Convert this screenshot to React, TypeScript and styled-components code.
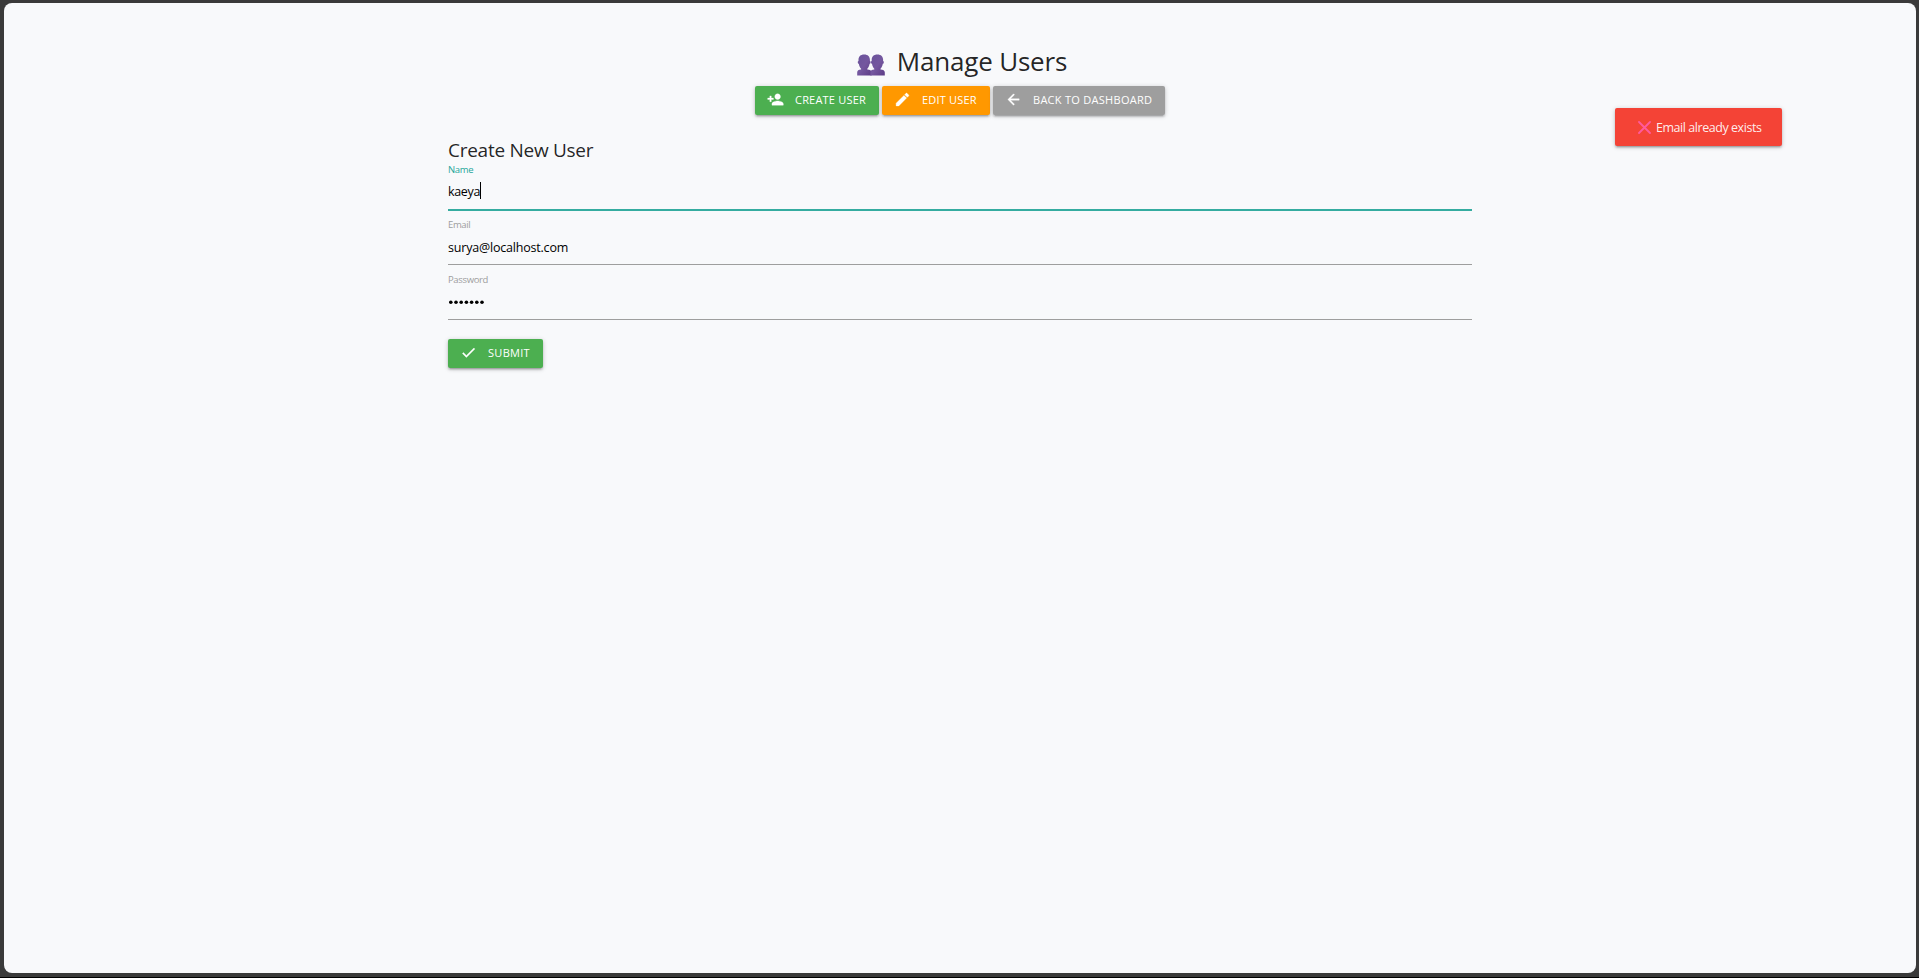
import React from "react";
import styled, { createGlobalStyle } from "styled-components";

const Global = createGlobalStyle`
  *, *::before, *::after { box-sizing: border-box; }
  html, body { margin: 0; background: #3a3a3a; }
  body { font-family: "Segoe UI", "Open Sans", "Noto Sans", sans-serif; color: rgba(0, 0, 0, 0.87); }
  h4, h5 { margin: 0; font-weight: 400; }
`;

const Frame = styled.div`
  height: 978px;
  padding: 3px 3px 4px 4px;
  background: #3a3a3a;
  border-bottom: 1px solid #000;
`;

const Page = styled.main`
  position: relative;
  height: 970px;
  padding-top: 36px;
  border-radius: 8px;
  background: #f8f9fb;
`;

const Header = styled.header`
  display: flex;
  flex-direction: column;
  align-items: center;
`;

const Title = styled.h4`
  display: flex;
  height: 43px;
  margin-bottom: 4px;
  align-items: center;
  gap: 12px;
  padding-left: 4px;
  font-size: 26px;
  line-height: 36px;
  letter-spacing: -0.2px;
  white-space: nowrap;
`;

const PeopleIcon = styled.svg`
  width: 28px;
  height: 22px;
  margin-top: 8px;
`;

const Actions = styled.div`
  display: flex;
  gap: 3px;
`;

const Button = styled.button<{ $color: string; $width: number; $track?: number }>`
  display: flex;
  align-items: center;
  width: ${(p) => p.$width}px;
  height: 29px;
  padding: 0 0 2px 12px;
  border: 0;
  border-radius: 2px;
  background: ${(p) => p.$color};
  box-shadow: 0 2px 2px 0 rgba(0, 0, 0, 0.14), 0 3px 1px -2px rgba(0, 0, 0, 0.12),
    0 1px 5px 0 rgba(0, 0, 0, 0.2);
  color: #fff;
  font-family: inherit;
  font-size: 11px;
  line-height: 27px;
  letter-spacing: ${(p) => p.$track ?? 0.2}px;
  text-transform: uppercase;
  white-space: nowrap;

  svg {
    flex: none;
    width: 17px;
    height: 17px;
    margin-right: 11px;
    fill: currentColor;
  }
`;

const Form = styled.form`
  width: 1024px;
  margin: 22px 0 0 444px;
`;

const FormTitle = styled.h5`
  height: 27px;
  font-size: 19px;
  line-height: 26px;
  letter-spacing: -0.27px;
`;

const Field = styled.div`
  height: 55px;
`;

const Label = styled.label<{ $active?: boolean }>`
  display: block;
  height: 12px;
  color: ${(p) => (p.$active ? "#26a69a" : "#9e9e9e")};
  font-size: 9.5px;
  line-height: 12px;
  letter-spacing: -0.35px;
`;

const Control = styled.div<{ $active?: boolean }>`
  display: flex;
  height: ${(p) => (p.$active ? 35 : 34)}px;
  padding-bottom: ${(p) => (p.$active ? 3 : 1)}px;
  align-items: center;
  border-bottom: ${(p) => (p.$active ? "2px solid #35aca0" : "1px solid #9e9e9e")};
  color: #000;
  font-size: 12.5px;
  letter-spacing: ${(p) => (p.$active ? -0.35 : -0.2)}px;
`;

const Caret = styled.span`
  width: 1px;
  height: 17px;
  margin-top: -1px;
  background: #000;
`;

const Dots = styled.svg`
  width: 38px;
  height: 6px;
`;

const SubmitRow = styled.div`
  padding-top: 10px;
`;

const Toast = styled.div`
  position: absolute;
  top: 105px;
  right: 134px;
  display: flex;
  align-items: center;
  width: 167px;
  height: 38px;
  padding-left: 23px;
  border-radius: 2px;
  background: #f44336;
  box-shadow: 0 2px 2px 0 rgba(0, 0, 0, 0.14), 0 3px 1px -2px rgba(0, 0, 0, 0.12),
    0 1px 5px 0 rgba(0, 0, 0, 0.2);
  color: rgba(255, 255, 255, 0.92);
  font-size: 12.5px;
  letter-spacing: -0.45px;
  white-space: nowrap;

  svg {
    width: 13px;
    height: 13px;
    margin-right: 5px;
  }
`;

const paths = {
  personAdd:
    "M15 12c2.21 0 4-1.79 4-4s-1.79-4-4-4-4 1.79-4 4 1.79 4 4 4zm-9-2V7H4v3H1v2h3v3h2v-3h3v-2H6zm9 4c-2.67 0-8 1.34-8 4v2h16v-2c0-2.66-5.33-4-8-4z",
  edit: "M3 17.25V21h3.75L17.81 9.94l-3.75-3.75L3 17.25zM20.71 7.04c.39-.39.39-1.02 0-1.41l-2.34-2.34c-.39-.39-1.02-.39-1.41 0l-1.83 1.83 3.75 3.75 1.83-1.83z",
  back: "M20 11H7.83l5.59-5.59L12 4l-8 8 8 8 1.41-1.41L7.83 13H20v-2z",
  check: "M9 16.17L4.83 12l-1.42 1.41L9 19 21 7l-1.41-1.41z",
};

const Icon = ({ name }: { name: keyof typeof paths }) => (
  <svg viewBox="0 0 24 24">
    <path d={paths[name]} stroke="currentColor" strokeWidth="0.5" />
  </svg>
);

const Silhouettes = () => (
  <PeopleIcon viewBox="0 0 28 22">
    <defs>
      <linearGradient id="people" x1="0" y1="0" x2="1" y2="1">
        <stop offset="0" stopColor="#69529a" />
        <stop offset="0.5" stopColor="#74579f" />
        <stop offset="1" stopColor="#5d3c86" />
      </linearGradient>
    </defs>
    {[0, 13.2].map((x) => (
      <path
        key={x}
        transform={`translate(${x} 0)`}
        fill="url(#people)"
        d="M7.200 .5C11 .5 12.900 2.700 12.900 5.800V7c.6.100.8.700.7 1.400-.1.800-.4 1.400-1 1.400-.3 2.200-1.100 3.800-2.300 4.900V15.600c2.700.2 4.300 1 4.300 3V21.500H.2V18.600c0-2 1.400-2.800 3.900-3V14.700C2.900 13.600 2.100 12 1.800 9.800c-.6 0-.9-.6-1-1.400-.1-.7.100-1.300.7-1.400V5.800C1.500 2.700 3.400.5 7.200.5z"
      />
    ))}
  </PeopleIcon>
);

export default function App() {
  return (
    <>
      <Global />
      <Frame>
        <Page>
          <Header>
            <Title>
              <Silhouettes />
              <span>Manage Users</span>
            </Title>
            <Actions>
              <Button $color="#4caf50" $width={124}>
                <Icon name="personAdd" />
                Create User
              </Button>
              <Button $color="#ff9800" $width={108}>
                <Icon name="edit" />
                Edit User
              </Button>
              <Button $color="#9e9e9e" $width={172} $track={0.28}>
                <Icon name="back" />
                Back to Dashboard
              </Button>
            </Actions>
          </Header>
          <Form onSubmit={(e) => e.preventDefault()}>
            <FormTitle>Create New User</FormTitle>
            <Field>
              <Label $active>Name</Label>
              <Control $active>
                kaeya
                <Caret />
              </Control>
            </Field>
            <Field>
              <Label>Email</Label>
              <Control>surya@localhost.com</Control>
            </Field>
            <Field>
              <Label>Password</Label>
              <Control>
                <Dots viewBox="0 0 38 6">
                  {Array.from({ length: 7 }, (_, i) => (
                    <circle key={i} cx={2.8 + i * 5.2} cy={3.2} r={1.8} />
                  ))}
                </Dots>
              </Control>
            </Field>
            <SubmitRow>
              <Button $color="#4caf50" $width={95} $track={0.3}>
                <Icon name="check" />
                Submit
              </Button>
            </SubmitRow>
          </Form>
          <Toast>
            <svg viewBox="0 0 13 13">
              <path d="M1 1l11 11M12 1L1 12" stroke="#ff5a9e" strokeWidth="1.8" strokeLinecap="round" />
            </svg>
            Email already exists
          </Toast>
        </Page>
      </Frame>
    </>
  );
}
